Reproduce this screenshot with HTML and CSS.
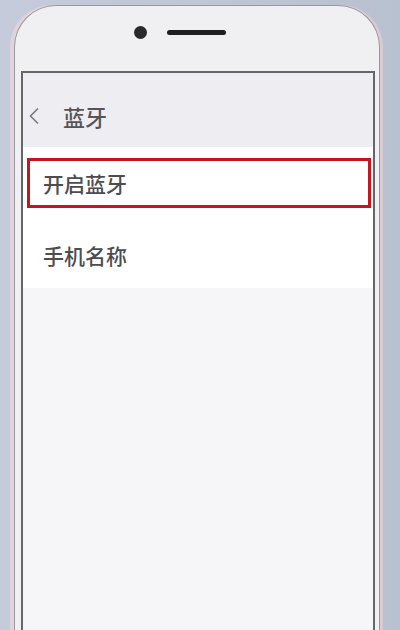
FILE: index.html
```html
<!doctype html>
<html lang="zh-CN">
  <head>
    <meta charset="UTF-8" />
    <meta name="viewport" content="width=device-width, initial-scale=1.0" />
    <link rel="stylesheet" href="styles.css">
    <title>蓝牙</title>
  </head>
  <body>
    <div class="phone">
      <!-- Camera and earpiece -->
      <div class="bezel">
        <span class="camera"></span>
        <span class="speaker"></span>
      </div>
      <div class="screen">
        <header class="titlebar">
          <svg class="back" width="12" height="18" viewBox="0 0 12 18">
            <polyline points="10,1.5 2.5,9 10,16.5" fill="none" stroke="#7a7a7e" stroke-width="1.6" />
          </svg>
          <h1>蓝牙</h1>
        </header>
        <div class="list">
          <div class="row highlighted">开启蓝牙</div>
          <div class="row">手机名称</div>
        </div>
      </div>
    </div>
  </body>
</html>
```

FILE: styles.css
```css
html,
body {
  height: 100%;
  margin: 0;
  overflow: hidden;
}

body {
  background: linear-gradient(to right, #c6cbdc, #b8c1cf);
  font-family: "Noto Sans CJK SC", "Noto Sans", sans-serif;
}

.phone {
  display: flex;
  flex-direction: column;
  width: 366px;
  height: 640px;
  box-sizing: border-box;
  margin: 5px 0 0 14px;
  padding: 0 4px 0 6px;
  background: #f0eff2;
  border: 1px solid #9a979d;
  border-bottom: none;
  border-radius: 42px 42px 0 0;
  box-shadow: -4px 0 0 #e2d3da, 3px 0 0 #d8cbd3;
}

.bezel {
  display: flex;
  align-items: flex-start;
  gap: 20px;
  height: 65px;
  box-sizing: border-box;
  padding: 20px 0 0 113px;
}

.camera {
  width: 13px;
  height: 13px;
  border-radius: 50%;
  background: #2a2a2c;
}

.speaker {
  width: 59px;
  height: 5px;
  margin-top: 4px;
  border-radius: 3px;
  background: #1f1f21;
}

.screen {
  flex: 1;
  display: flex;
  flex-direction: column;
  background: #f6f5f8;
  border: 2px solid #66656b;
  border-bottom: none;
}

.titlebar {
  display: flex;
  align-items: center;
  height: 74px;
  box-sizing: border-box;
  padding: 12px 0 0 5px;
  background: #eeedf1;
}

.titlebar h1 {
  margin: 0 0 0 23px;
  font-size: 22px;
  font-weight: 500;
  color: #555558;
}

.list {
  display: flex;
  flex-direction: column;
  height: 141px;
  background: #fff;
}

.row {
  display: flex;
  align-items: center;
  font-size: 21px;
  font-weight: 500;
  color: #4d4d50;
}

.row.highlighted {
  height: 50px;
  box-sizing: border-box;
  margin: 11px 2px 0 4px;
  padding-left: 13px;
  border: 3px solid #c4161e;
}

.row + .row {
  flex: 1;
  padding: 13px 0 0 20px;
}
```
